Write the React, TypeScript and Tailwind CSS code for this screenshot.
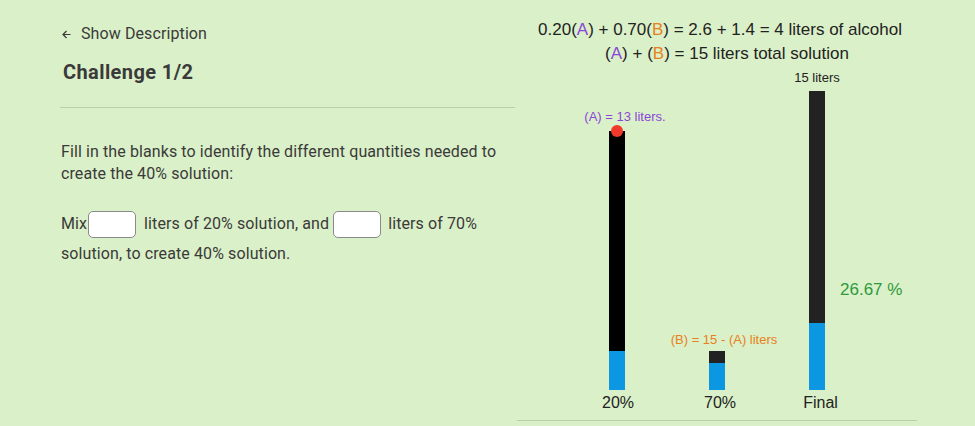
import React from "react";

const A = () => <span className="text-[#8b46d8]">A</span>;
const B = () => <span className="text-[#e8801c]">B</span>;

export default function App() {
  return (
    <div className="w-[975px] h-[426px] bg-[#daf0c8] flex overflow-hidden">
      {/* Left column */}
      <div className="w-[517px] shrink-0 pl-[60px] pr-[2px] pt-[23px] font-['Roboto',sans-serif] text-[#3a3a3a] tracking-[0.1px]">
        <div className="flex items-center h-[22px] text-[16px]">
          <span className="w-[21px] pl-[2px] flex items-center">
            <svg width="9" height="9" viewBox="0 0 9 9" fill="none" stroke="#3a3a3a" strokeWidth="1.2">
              <path d="M8.5 4.5H1M4.5 1L1 4.5L4.5 8" />
            </svg>
          </span>
          <span>Show Description</span>
        </div>
        <div className="mt-[13px] h-[28px] leading-[28px] pl-[3px] text-[20px] font-bold tracking-[0.4px]">Challenge 1/2</div>
        <div className="mt-[21px] h-px bg-[#b9d1a6]" />
        <p className="mt-[33px] text-[16px] leading-[22px] pl-[1px]">
          Fill in the blanks to identify the different quantities needed to
          <br />
          create the 40% solution:
        </p>
        <div className="mt-[24px] text-[16px] pl-[1px] leading-[30px]">
          <div className="flex items-center h-[30px]">
            <span>Mix</span>
            <span className="inline-block w-[48px] h-[27px] ml-[1px] mr-[8px] bg-white border border-[#8a8a8a] rounded-[5px]" />
            <span>liters of 20% solution, and</span>
            <span className="inline-block w-[48px] h-[27px] ml-[4px] mr-[7px] bg-white border border-[#8a8a8a] rounded-[5px]" />
            <span>liters of 70%</span>
          </div>
          <div>solution, to create 40% solution.</div>
        </div>
      </div>

      {/* Right column: chart canvas */}
      <div className="relative w-[400px] h-[426px] shrink-0 font-['Liberation_Sans',Arial,sans-serif] text-[#222]">
        <div className="absolute left-[3px] top-[19px] w-[400px] text-center text-[17px] leading-[22px]">
          0.20(<A />) + 0.70(<B />) = 2.6 + 1.4 = 4 liters of alcohol
        </div>
        <div className="absolute left-[10px] top-[43px] w-[400px] text-center text-[17px] leading-[22px]">
          (<A />) + (<B />) = 15 liters total solution
        </div>
        <div className="absolute left-[250px] top-[70px] w-[100px] text-center text-[13px] leading-[16px]">
          15 liters
        </div>
        <div className="absolute left-[58px] top-[109px] w-[100px] text-center text-[13px] leading-[16px] text-[#8b46d8]">
          (A) = 13 liters.
        </div>
        <div className="absolute left-[137px] top-[332px] w-[140px] text-center text-[13px] leading-[16px] text-[#e8801c]">
          (B) = 15 - (A) liters
        </div>
        <div className="absolute left-[323px] top-[280px] text-[17px] leading-[20px] text-[#2f9a3c]">
          26.67 %
        </div>

        {/* bars */}
        <div className="absolute left-[50px] top-0 h-[390px] w-[300px] flex items-end">
          <div className="w-[100px] flex justify-center">
            <div className="relative w-[16px] h-[259px] bg-black flex flex-col justify-end">
              <div className="absolute left-1/2 -translate-x-1/2 -top-[6px] w-[12px] h-[12px] rounded-full bg-[#f0392b]" />
              <div className="h-[39px] bg-[#0b97e2]" />
            </div>
          </div>
          <div className="w-[100px] flex justify-center">
            <div className="w-[16px] h-[39px] bg-[#222222] flex flex-col justify-end">
              <div className="h-[27px] bg-[#0b97e2]" />
            </div>
          </div>
          <div className="w-[100px] flex justify-center">
            <div className="w-[16px] h-[299px] bg-[#222222] flex flex-col justify-end">
              <div className="h-[67px] bg-[#0b97e2]" />
            </div>
          </div>
        </div>

        {/* bar labels */}
        <div className="absolute left-[51px] top-[393px] w-[300px] flex text-[16px] leading-[20px]">
          <div className="w-[100px] text-center">20%</div>
          <div className="w-[100px] text-center pl-[4px]">70%</div>
          <div className="w-[100px] text-center pl-[5px]">Final</div>
        </div>

        <div className="absolute left-0 top-[420px] w-[400px] h-px bg-[#b9d1a6]" />
      </div>
    </div>
  );
}
